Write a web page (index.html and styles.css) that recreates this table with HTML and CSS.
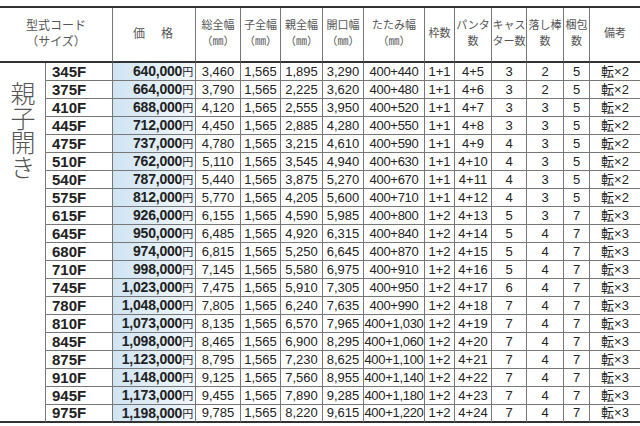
FILE: index.html
```html
<!DOCTYPE html>
<html lang="ja">
<head>
<meta charset="utf-8">
<link rel="stylesheet" href="styles.css">
</head>
<body>
<div class="sheet">
  <div class="grid" id="grid">
    <div class="h span2"><span>型式コード</span><span>（サイズ）</span></div>
    <div class="h"><span class="wide">価　格</span></div>
    <div class="h"><span>総全幅</span><span>（㎜）</span></div>
    <div class="h"><span>子全幅</span><span>（㎜）</span></div>
    <div class="h"><span>親全幅</span><span>（㎜）</span></div>
    <div class="h"><span>開口幅</span><span>（㎜）</span></div>
    <div class="h"><span>たたみ幅</span><span>（㎜）</span></div>
    <div class="h"><span>枠数</span></div>
    <div class="h"><span>パンタ</span><span>数</span></div>
    <div class="h"><span>キャス</span><span>ター数</span></div>
    <div class="h"><span>落し棒</span><span>数</span></div>
    <div class="h"><span>梱包</span><span>数</span></div>
    <div class="h last"><span>備考</span></div>
    <div class="label"><span>親子開き</span></div>
  </div>
</div>
<script src="app.js"></script>
</body>
</html>
```

FILE: app.js
```js
const rows = [
["345F","640,000","3,460","1,565","1,895","3,290","400+440","1+1","4+5","3","2","5","転×2"],
["375F","664,000","3,790","1,565","2,225","3,620","400+480","1+1","4+6","3","2","5","転×2"],
["410F","688,000","4,120","1,565","2,555","3,950","400+520","1+1","4+7","3","3","5","転×2"],
["445F","712,000","4,450","1,565","2,885","4,280","400+550","1+1","4+8","3","3","5","転×2"],
["475F","737,000","4,780","1,565","3,215","4,610","400+590","1+1","4+9","4","3","5","転×2"],
["510F","762,000","5,110","1,565","3,545","4,940","400+630","1+1","4+10","4","3","5","転×2"],
["540F","787,000","5,440","1,565","3,875","5,270","400+670","1+1","4+11","4","3","5","転×2"],
["575F","812,000","5,770","1,565","4,205","5,600","400+710","1+1","4+12","4","3","5","転×2"],
["615F","926,000","6,155","1,565","4,590","5,985","400+800","1+2","4+13","5","3","7","転×3"],
["645F","950,000","6,485","1,565","4,920","6,315","400+840","1+2","4+14","5","4","7","転×3"],
["680F","974,000","6,815","1,565","5,250","6,645","400+870","1+2","4+15","5","4","7","転×3"],
["710F","998,000","7,145","1,565","5,580","6,975","400+910","1+2","4+16","5","4","7","転×3"],
["745F","1,023,000","7,475","1,565","5,910","7,305","400+950","1+2","4+17","6","4","7","転×3"],
["780F","1,048,000","7,805","1,565","6,240","7,635","400+990","1+2","4+18","7","4","7","転×3"],
["810F","1,073,000","8,135","1,565","6,570","7,965","400+1,030","1+2","4+19","7","4","7","転×3"],
["845F","1,098,000","8,465","1,565","6,900","8,295","400+1,060","1+2","4+20","7","4","7","転×3"],
["875F","1,123,000","8,795","1,565","7,230","8,625","400+1,100","1+2","4+21","7","4","7","転×3"],
["910F","1,148,000","9,125","1,565","7,560","8,955","400+1,140","1+2","4+22","7","4","7","転×3"],
["945F","1,173,000","9,455","1,565","7,890","9,285","400+1,180","1+2","4+23","7","4","7","転×3"],
["975F","1,198,000","9,785","1,565","8,220","9,615","400+1,220","1+2","4+24","7","4","7","転×3"]
];
const grid = document.getElementById('grid');
rows.forEach((r, ri) => {
  r.forEach((v, ci) => {
    const d = document.createElement('div');
    d.className = 'c';
    if (ci === 0) d.classList.add('model');
    else if (ci === 1) d.classList.add('price');
    else if (ci === 6) d.classList.add('tatami');
    else d.classList.add('num');
    if (ci === r.length - 1) d.classList.add('last');
    if (ri === rows.length - 1) d.classList.add('bottom');
    if (ci === 1) {
      d.innerHTML = v + '<span class="yen">円</span>';
    } else {
      d.textContent = v;
    }
    grid.appendChild(d);
  });
});
```

FILE: styles.css
```css
html, body {
  margin: 0;
  padding: 0;
  background: #fff;
}
body {
  font-family: "Liberation Sans", "Noto Sans CJK JP", sans-serif;
  color: #222;
}
.sheet {
  width: 640px;
  height: 426px;
  padding-top: 6px;
  box-sizing: border-box;
}
.grid {
  display: grid;
  grid-template-columns: 46px 67px 83px 45px 40px 42px 41px 61px 30px 37px 35px 37px 26px 50px;
  grid-template-rows: 55px repeat(20, 18px);
  border-top: 2px solid #333;
}
.h {
  box-sizing: border-box;
  border-right: 1px solid #777;
  border-bottom: 2px solid #333;
  display: flex;
  flex-direction: column;
  align-items: center;
  justify-content: center;
  gap: 1px;
  padding-bottom: 5px;
  font-family: "Noto Sans CJK JP", sans-serif;
  font-size: 11px;
  line-height: 15px;
  color: #555;
  white-space: nowrap;
}
.h span {
  display: block;
  height: 15px;
}
.h.span2 {
  grid-column: span 2;
  font-size: 12px;
}
.h .wide {
  font-size: 12px;
  letter-spacing: 2px;
}
.last {
  border-right: none !important;
}
.label {
  grid-column: 1;
  grid-row: 2 / span 20;
  box-sizing: border-box;
  border-right: 1px solid #777;
  border-bottom: 2px solid #333;
  display: flex;
  justify-content: center;
  padding-top: 18px;
}
.label span {
  writing-mode: vertical-rl;
  text-orientation: upright;
  font-family: "Noto Sans CJK JP", sans-serif;
  font-size: 25px;
  line-height: 25px;
  letter-spacing: -0.5px;
  color: #555;
  font-weight: 300;
}
.c {
  box-sizing: border-box;
  border-right: 1px solid #777;
  border-bottom: 1px solid #777;
  font-size: 13px;
  line-height: 17px;
  white-space: nowrap;
  color: #222;
}
.c.bottom {
  border-bottom: 2px solid #333;
  line-height: 16px;
}
.model {
  font-weight: bold;
  font-size: 15px;
  padding-left: 6px;
}
.price {
  font-weight: bold;
  font-size: 14px;
  text-align: right;
  padding-right: 2px;
  background: linear-gradient(to right, #cfe4f2, #f2f8fc);
  letter-spacing: -0.2px;
}
.price .yen {
  font-size: 11px;
  font-weight: normal;
  font-family: "Noto Sans CJK JP", sans-serif;
}
.num, .tatami {
  text-align: center;
}
.tatami {
  letter-spacing: -0.3px;
}
```
